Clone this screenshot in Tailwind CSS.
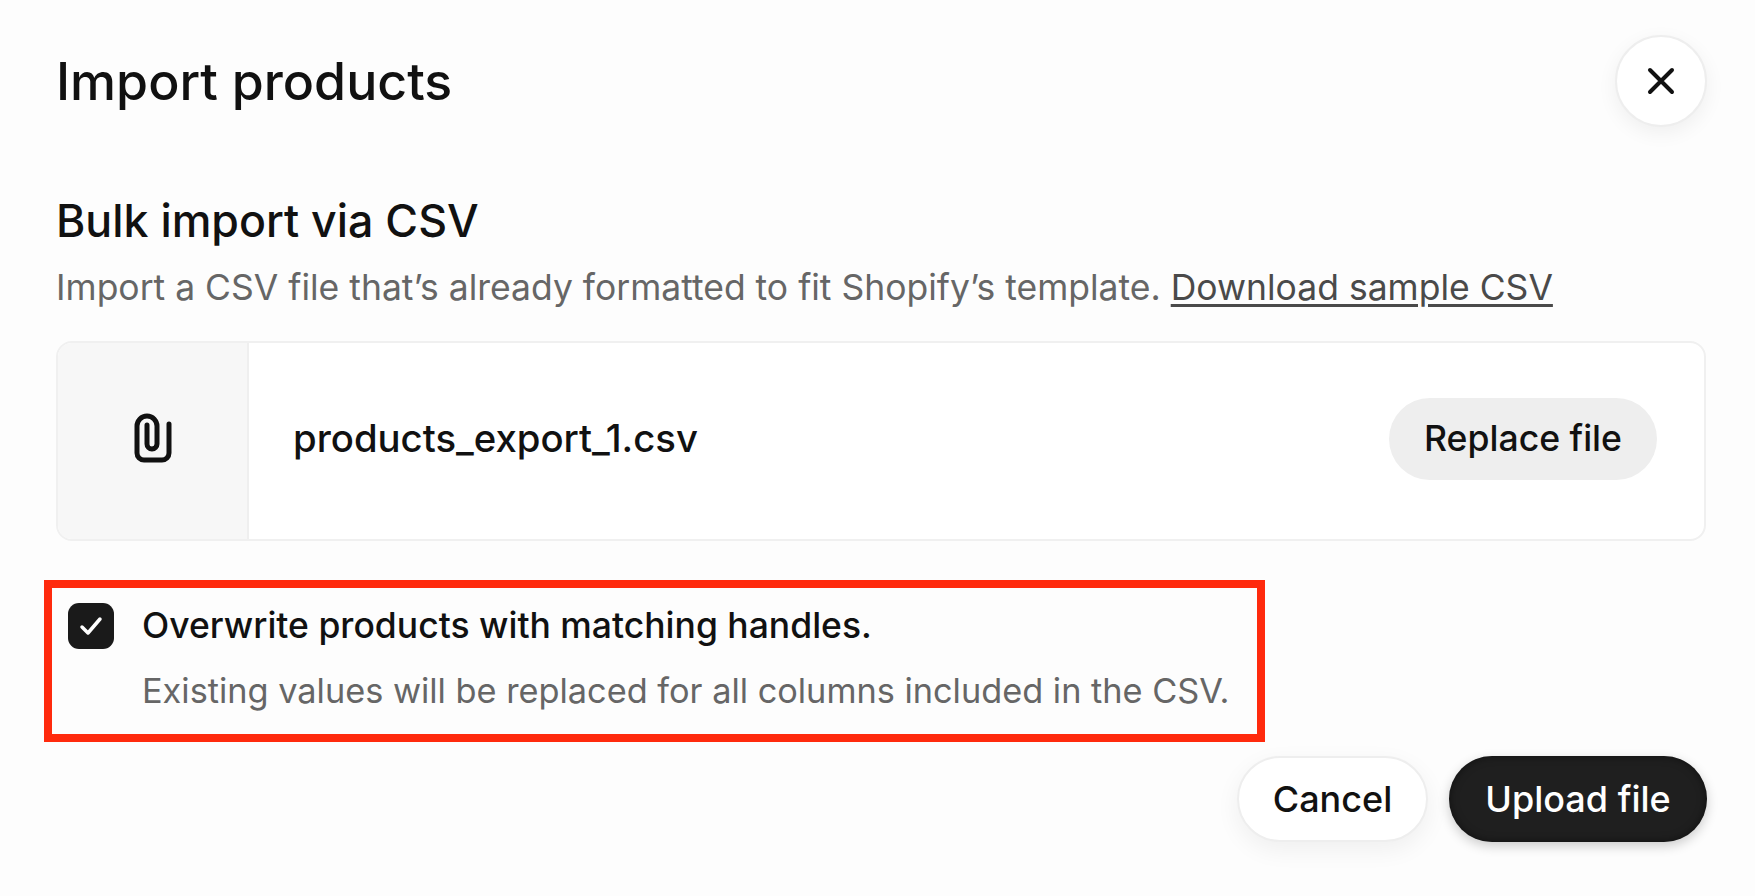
<!DOCTYPE html>
<html lang="en">
<head>
  <meta charset="UTF-8" />
  <title>Import products</title>
  <script src="https://cdn.jsdelivr.net/npm/@tailwindcss/browser@4"></script>
</head>
<body class="bg-[#fdfdfd] h-[896px] overflow-hidden font-['Inter',sans-serif] text-[#111111]">
  <div class="pl-14 pr-[48px] pt-9">
    <!-- header -->
    <header class="flex items-start justify-between">
      <h1 class="text-[51.800px] leading-[90px] font-medium">Import products</h1>
      <button class="-mt-[1px] w-[92px] h-[92px] rounded-full bg-white border-2 border-[#eeeeee] shadow-[0_6px_20px_rgba(0,0,0,0.06)] flex items-center justify-center">
        <svg width="30" height="30" viewBox="0 0 30 30" fill="none" stroke="#111111" stroke-width="4" stroke-linecap="round"><path d="M4 4l22 22M26 4L4 26" /></svg>
      </button>
    </header>

    <section class="mt-[65px] pr-[1px]">
      <h2 class="text-[44.700px] leading-[58px] font-medium">Bulk import via CSV</h2>
      <p class="mt-[13px] text-[35.500px] leading-[50px] text-[#666666]">Import a CSV file that’s already formatted to fit Shopify’s template. <a class="text-[#4a4a4a] underline underline-offset-4">Download sample CSV</a></p>

      <!-- file row -->
      <div class="mt-[28px] h-[200px] rounded-2xl border-2 border-[#f0f0f0] bg-white flex items-center overflow-hidden">
        <div class="w-[191px] h-full pb-[6px] bg-[#f7f7f7] border-r-2 border-[#efefef] flex items-center justify-center shrink-0">
          <svg width="38" height="50" viewBox="0 0 38 50" fill="none" stroke="#111111" stroke-width="5" stroke-linecap="round" stroke-linejoin="round"><path d="M35 11v29a7 7 0 0 1-7 7H10a7 7 0 0 1-7-7V13a10 10 0 0 1 20 0v18a5 5 0 0 1-10 0V12" /></svg>
        </div>
        <span class="ml-[44px] mb-[5px] text-[38.300px] font-medium flex-1">products_export_1.csv</span>
        <button class="mr-[47px] mb-[5px] w-[268px] h-[82px] rounded-full bg-[#eeeeee] text-[35.600px] font-medium">Replace file</button>
      </div>
    </section>

    <!-- overwrite option, with the red mark round it -->
    <label class="mt-[39px] -ml-3 w-[1221px] h-[162px] border-[8px] border-[#ff2a0d] flex gap-[28px] pl-[16px] pt-[13px]">
      <span class="mt-[2px] w-[46px] h-[46px] rounded-[11px] bg-[#1a1a1a] flex items-center justify-center shrink-0">
        <svg width="24" height="20" viewBox="0 0 24 20" fill="none" stroke="#ffffff" stroke-width="3.500" stroke-linecap="round" stroke-linejoin="round"><path d="M3 11l6 6L21 3" /></svg>
      </span>
      <span class="flex flex-col whitespace-nowrap">
        <span class="text-[35.500px] leading-[50px] font-medium">Overwrite products with matching handles.</span>
        <span class="mt-[15px] text-[34.300px] leading-[50px] text-[#666666]">Existing values will be replaced for all columns included in the CSV.</span>
      </span>
    </label>

    <div class="mt-[14px] flex justify-end gap-[21px]">
      <button class="w-[191px] h-[86px] rounded-full bg-white border-2 border-[#eeeeee] shadow-[0_8px_24px_rgba(0,0,0,0.06)] text-[36px] font-medium">Cancel</button>
      <button class="w-[258px] h-[86px] rounded-full bg-[#1f1f1f] text-white text-[36px] font-medium shadow-[0_4px_12px_rgba(0,0,0,0.2),inset_0_0_8px_rgba(0,0,0,0.5)]">Upload file</button>
    </div>
  </div>
</body>
</html>
